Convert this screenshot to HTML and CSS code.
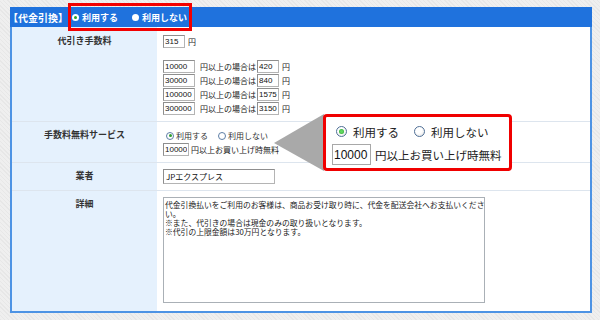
FILE: index.html
```html
<!DOCTYPE html>
<html lang="ja">
<head>
<meta charset="utf-8">
<link rel="stylesheet" href="styles.css">
</head>
<body>
<div class="panel">
  <div class="head">
    <span class="head-title">【代金引換】</span>
    <span class="hradio on"></span><span class="hlabel">利用する</span>
    <span class="hradio"></span><span class="hlabel">利用しない</span>
  </div>
  <div class="body">
    <div class="row r1">
      <div class="label">代引き手数料</div>
      <div class="val">
        <div class="line"><input class="in w22" value="315"><span class="unit">円</span></div>
        <div class="tiers">
          <div class="line"><input class="in w32" value="10000"><span class="cond">円以上の場合は</span><input class="in w22" value="420"><span class="unit">円</span></div>
          <div class="line"><input class="in w32" value="30000"><span class="cond">円以上の場合は</span><input class="in w22" value="840"><span class="unit">円</span></div>
          <div class="line"><input class="in w32" value="100000"><span class="cond">円以上の場合は</span><input class="in w22" value="1575"><span class="unit">円</span></div>
          <div class="line"><input class="in w32" value="300000"><span class="cond">円以上の場合は</span><input class="in w22" value="3150"><span class="unit">円</span></div>
        </div>
      </div>
    </div>
    <div class="row r2">
      <div class="label">手数料無料サービス</div>
      <div class="val">
        <div class="rline">
          <span class="sradio on"></span><span class="slabel">利用する</span>
          <span class="sradio"></span><span class="slabel">利用しない</span>
        </div>
        <div class="line"><input class="in w26" value="10000"><span class="cond2">円以上お買い上げ時無料</span></div>
      </div>
    </div>
    <div class="row r3">
      <div class="label">業者</div>
      <div class="val"><input class="in wide" value="JPエクスプレス"></div>
    </div>
    <div class="row r4">
      <div class="label">詳細</div>
      <div class="val"><textarea class="detail" wrap="off" readonly>代金引換払いをご利用のお客様は、商品お受け取り時に、代金を配送会社へお支払いくださ
い。
※また、代引きの場合は現金のみの取り扱いとなります。
※代引の上限金額は30万円となります。</textarea></div>
    </div>
  </div>

  <div class="hl-box"></div>

  <svg class="arrow" width="50" height="57" viewBox="0 0 50 57"><polygon points="0,29 50,0 50,57" fill="#a9a9a9"/></svg>
  <div class="callout">
    <div class="c-radios">
      <span class="cradio on"></span><span class="clabel">利用する</span>
      <span class="cradio"></span><span class="clabel">利用しない</span>
    </div>
    <div class="c-line"><input class="c-in" value="10000"><span class="c-text">円以上お買い上げ時無料</span></div>
  </div>
</div>
</body>
</html>
```

FILE: styles.css
```css
html, body {
  margin: 0;
  padding: 0;
}
body {
  width: 600px;
  height: 320px;
  overflow: hidden;
  background-color: #efefef;
  background-image: repeating-linear-gradient(45deg, rgba(0,0,0,0.035) 0 1px, transparent 1px 3px);
  font-family: "Noto Sans CJK JP", "Liberation Sans", sans-serif;
  font-size: 8px;
  color: #222;
}
.panel {
  position: relative;
  margin: 7px 0 0 10px;
  width: 582px;
}
.head {
  height: 20px;
  background: #1f72dd;
  display: flex;
  align-items: center;
  color: #fff;
  font-weight: bold;
  font-size: 10px;
}
.head-title {
  margin-left: -2px;
  margin-right: 4px;
}
.hradio {
  width: 7px;
  height: 7px;
  border-radius: 50%;
  background: #fff;
  box-sizing: border-box;
  margin-right: 3px;
  display: inline-flex;
  align-items: center;
  justify-content: center;
}
.hradio.on::after {
  content: "";
  width: 3px;
  height: 3px;
  border-radius: 50%;
  background: #2aa52a;
}
.hlabel {
  font-size: 9px;
  margin-right: 14px;
}
.body {
  background: #fff;
  border: 2px solid #4d93e4;
  border-top: none;
}
.row {
  display: grid;
  grid-template-columns: 145px 1fr;
  border-bottom: 1px solid #dde5ee;
}
.row.r4 { border-bottom: none; }
.r1 { height: 94px; }
.r2 { height: 40px; }
.r3 { height: 27px; }
.r4 { height: 120px; }
.label {
  background: #e5f1fd;
  text-align: center;
  font-weight: bold;
  font-size: 9px;
  line-height: 10px;
  padding-top: 8px;
  color: #333;
}
.r1 .label { padding-top: 9px; }
.val {
  padding: 7px 0 0 6px;
}
.r3 .val, .r4 .val { padding-top: 6px; }
.line {
  display: flex;
  align-items: center;
  height: 14px;
}
.tiers {
  margin-top: 11px;
}
.in {
  box-sizing: border-box;
  height: 13px;
  font-family: "Liberation Sans", "Noto Sans CJK JP", sans-serif;
  font-size: 8px;
  color: #111;
  padding: 0 1px;
  margin: 0;
  border: 1px solid #b4b4b4;
  border-top-color: #8e8e8e;
  border-left-color: #8e8e8e;
  background: #fff;
  outline: none;
}
.w22 { width: 22px; }
.w26 { width: 26px; }
.w32 { width: 32px; }
.wide {
  width: 112px;
  height: 15px;
  padding: 0 2px;
  font-family: "Noto Sans CJK JP", sans-serif;
}
.unit { margin-left: 3px; }
.cond { margin: 0 1px 0 5px; }
.cond2 { margin-left: 2px; }
.rline {
  display: flex;
  align-items: center;
  height: 13px;
}
.sradio {
  width: 8px;
  height: 8px;
  border-radius: 50%;
  border: 1px solid #5d7ea6;
  box-sizing: border-box;
  background: #fff;
  margin: 0 2px 0 3px;
  display: inline-flex;
  align-items: center;
  justify-content: center;
}
.sradio.on::after {
  content: "";
  width: 3px;
  height: 3px;
  border-radius: 50%;
  background: #2e9e2e;
}
.slabel { margin-right: 7px; color: #333; }
.detail {
  display: block;
  box-sizing: border-box;
  width: 322px;
  height: 106px;
  margin: 0;
  padding: 2px 1px;
  border: 1px solid #aab0b6;
  font-family: "Noto Sans CJK JP", sans-serif;
  font-size: 7.8px;
  line-height: 9px;
  color: #222;
  resize: none;
  overflow: hidden;
  white-space: pre;
  outline: none;
}
.hl-box {
  position: absolute;
  left: 58px;
  top: -4px;
  width: 124px;
  height: 28px;
  box-sizing: border-box;
  border: 3px solid #f20000;
}
.arrow {
  position: absolute;
  left: 264px;
  top: 107px;
}
.callout {
  position: absolute;
  left: 313px;
  top: 107px;
  width: 189px;
  height: 57px;
  box-sizing: border-box;
  border: 3px solid #f00000;
  border-radius: 4px;
  background: #fff;
  padding: 5px 0 0 6px;
  font-size: 11.5px;
  color: #222;
}
.c-radios {
  display: flex;
  align-items: center;
  height: 19px;
}
.cradio {
  width: 11px;
  height: 11px;
  border-radius: 50%;
  border: 1px solid #4f6f96;
  box-sizing: border-box;
  background: radial-gradient(circle at 40% 35%, #ffffff 0 40%, #dcdcdc 100%);
  margin: 0 6px 0 4px;
  display: inline-flex;
  align-items: center;
  justify-content: center;
}
.cradio.on::after {
  content: "";
  width: 5px;
  height: 5px;
  border-radius: 50%;
  background: radial-gradient(circle, #5fd65f 0 30%, #1e9a1e 100%);
}
.clabel { margin-right: 11px; }
.c-line {
  display: flex;
  align-items: center;
  margin-top: 3px;
}
.c-in {
  box-sizing: border-box;
  width: 39px;
  height: 21px;
  margin: 0;
  padding: 0 1px;
  border: 1px solid #a8a8a8;
  font-family: "Liberation Sans", sans-serif;
  font-size: 12px;
  color: #111;
  outline: none;
}
.c-text { margin-left: 4px; }
```
